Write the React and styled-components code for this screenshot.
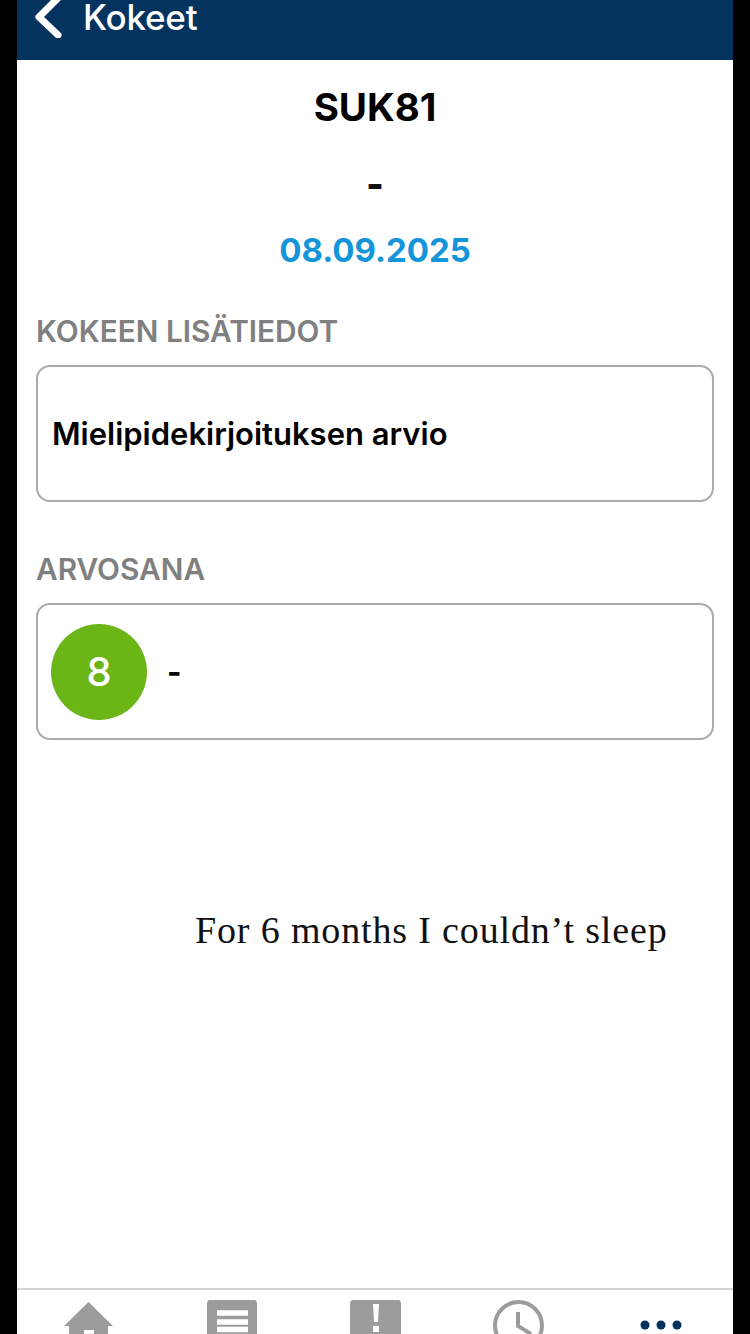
import React from 'react';
import styled, { createGlobalStyle } from 'styled-components';

const GlobalStyle = createGlobalStyle`
  html, body {
    margin: 0;
    padding: 0;
    background: #000;
  }
  body {
    font-family: Inter, "Liberation Sans", sans-serif;
  }
`;

const Page = styled.div`
  width: 750px;
  height: 1334px;
  padding: 0 17px;
  box-sizing: border-box;
  background: #000;
  overflow: hidden;
`;

const Screen = styled.div`
  position: relative;
  width: 716px;
  height: 1334px;
  background: #fff;
  display: flex;
  flex-direction: column;
  overflow: hidden;
`;

const Header = styled.header`
  height: 60px;
  flex: none;
  background: #05335f;
  color: #fff;
  display: flex;
  align-items: flex-start;
  gap: 20px;
  padding: 0 0 0 16px;
  box-sizing: border-box;
`;

const BackIcon = styled.svg`
  width: 30px;
  height: 38px;
  flex: none;
`;

const HeaderTitle = styled.div`
  font-size: 35px;
  line-height: 34px;
  font-weight: 500;
  letter-spacing: -0.2px;
`;

const Main = styled.main`
  flex: 1;
  padding: 0 19px;
  display: flex;
  flex-direction: column;
`;

const Title = styled.h1`
  margin: 25px 0 0;
  text-align: center;
  font-size: 38.5px;
  line-height: 44px;
  font-weight: 700;
  color: #000;
`;

const Subtitle = styled.div`
  margin-top: 33px;
  text-align: center;
  font-size: 38px;
  line-height: 44px;
  font-weight: 800;
  color: #111;
`;

const DateText = styled.div`
  margin-top: 22px;
  text-align: center;
  font-size: 33px;
  line-height: 44px;
  font-weight: 700;
  color: #1495d9;
`;

const SectionLabel = styled.div`
  margin-top: ${(p) => p.$top}px;
  font-size: 29.8px;
  line-height: 36px;
  font-weight: 600;
  color: #808080;
`;

const Card = styled.div`
  margin-top: 16px;
  height: 137px;
  box-sizing: border-box;
  border: 2px solid #aaa;
  border-radius: 14px;
  display: flex;
  align-items: center;
  padding: 0 13px;
`;

const CardText = styled.div`
  margin-left: 1px;
  font-size: 31px;
  font-weight: 600;
  color: #000;
`;

const GradeCircle = styled.div`
  width: 96px;
  height: 96px;
  border-radius: 50%;
  background: #6cb517;
  color: #fff;
  font-size: 40px;
  font-weight: 500;
  display: flex;
  align-items: center;
  justify-content: center;
  flex: none;
`;

const GradeNote = styled.div`
  margin-left: 20px;
  font-size: 31px;
  font-weight: 700;
  color: #000;
`;

const Caption = styled.div`
  position: absolute;
  left: 178px;
  top: 904px;
  font-family: "Liberation Serif", serif;
  font-size: 38px;
  line-height: 52px;
  letter-spacing: 0.85px;
  color: #111;
  white-space: nowrap;
`;

const TabBar = styled.nav`
  height: 46px;
  flex: none;
  border-top: 2px solid #d4d4d4;
  display: grid;
  grid-template-columns: repeat(5, 1fr);
  box-sizing: border-box;
  overflow: hidden;
`;

const Tab = styled.div`
  display: flex;
  justify-content: center;
  padding-top: 10px;
`;

const TabIcon = styled.svg`
  width: 56px;
  height: 56px;
  flex: none;
`;

function App() {
  return (
    <Page>
      <GlobalStyle />
      <Screen>
        <Header>
          <BackIcon viewBox="0 0 30 38">
            <path d="M25 -2 L6 17 L25 35" fill="none" stroke="#fff" strokeWidth="7" strokeLinecap="round" strokeLinejoin="round" />
          </BackIcon>
          <HeaderTitle>Kokeet</HeaderTitle>
        </Header>
        <Main>
          <Title>SUK81</Title>
          <Subtitle>-</Subtitle>
          <DateText>08.09.2025</DateText>
          <SectionLabel $top={41}>KOKEEN LISÄTIEDOT</SectionLabel>
          <Card>
            <CardText>Mielipidekirjoituksen arvio</CardText>
          </Card>
          <SectionLabel $top={49}>ARVOSANA</SectionLabel>
          <Card>
            <GradeCircle>8</GradeCircle>
            <GradeNote>-</GradeNote>
          </Card>
        </Main>
        <Caption>For 6 months I couldn’t sleep</Caption>
        <TabBar>
          <Tab>
            <TabIcon viewBox="0 0 56 56">
              <path d="M27.5 2 L52 26 L47 26 L47 56 L8 56 L8 26 L3 26 Z" fill="#9c9c9c" />
              <rect x="23" y="30" width="10" height="20" fill="#fff" />
            </TabIcon>
          </Tab>
          <Tab>
            <TabIcon viewBox="0 0 56 56">
              <rect x="3" y="-1" width="50" height="57" rx="5" fill="#9c9c9c" />
              <path d="M13 13 H44 M13 22 H44 M13 29.5 H44" stroke="#fff" strokeWidth="5.5" />
            </TabIcon>
          </Tab>
          <Tab>
            <TabIcon viewBox="0 0 56 56">
              <rect x="3" y="-1" width="51" height="57" rx="5" fill="#9c9c9c" />
              <path d="M26 4 H32 L31 22 H27 Z" fill="#fff" />
              <rect x="26" y="26" width="6" height="6" fill="#fff" />
            </TabIcon>
          </Tab>
          <Tab>
            <TabIcon viewBox="0 0 56 56">
              <circle cx="28.5" cy="25.5" r="23.5" fill="none" stroke="#9c9c9c" strokeWidth="4" />
              <path d="M28 12 L28 26 L41 34" fill="none" stroke="#9c9c9c" strokeWidth="4" />
            </TabIcon>
          </Tab>
          <Tab>
            <TabIcon viewBox="0 0 56 56">
              <circle cx="12" cy="25" r="4.5" fill="#05335f" />
              <circle cx="28" cy="25" r="4.5" fill="#05335f" />
              <circle cx="44" cy="25" r="4.5" fill="#05335f" />
            </TabIcon>
          </Tab>
        </TabBar>
      </Screen>
    </Page>
  );
}

export default App;
